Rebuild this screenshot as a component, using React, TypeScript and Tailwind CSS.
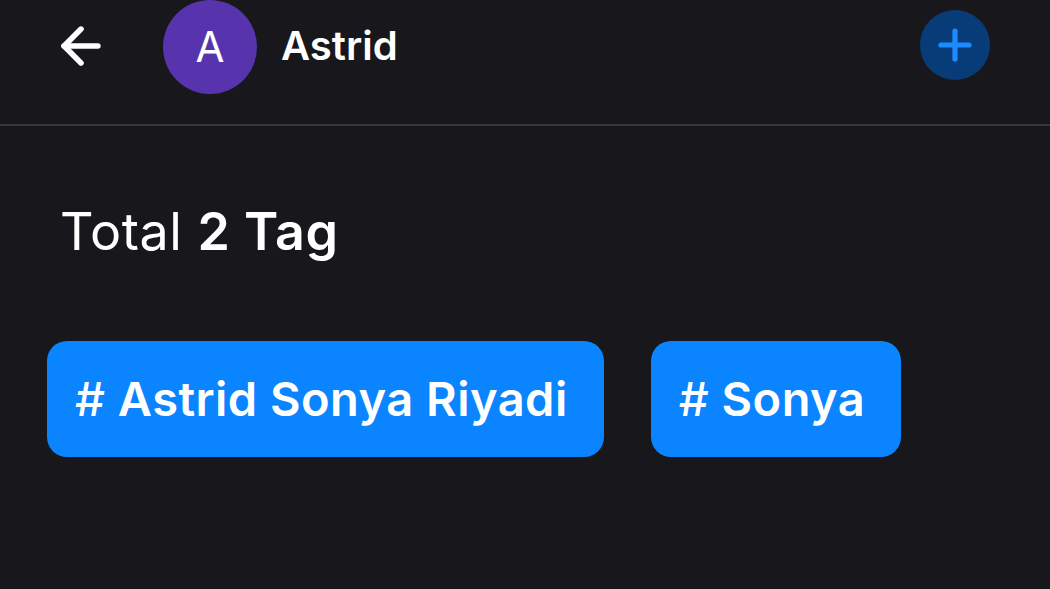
import { ArrowLeft, Plus } from "lucide-react";

const tags = ["Astrid Sonya Riyadi", "Sonya"];

export default function App() {
  return (
    <div
      className="h-[589px] w-[1050px] overflow-hidden bg-[#18181c] text-white"
      style={{ fontFamily: "Inter, 'Noto Sans', sans-serif" }}
    >
      <header className="flex h-[126px] items-start border-b-2 border-[#38383c] pr-[60px]">
        <button className="mt-[17px] ml-[52px] flex h-[58px] w-[58px] items-center justify-center">
          <ArrowLeft size={62} strokeWidth={2.3} />
        </button>
        <div className="ml-[53px] flex h-[94px] w-[94px] items-center justify-center rounded-full bg-[#5734ad] text-[42px] font-normal leading-none">
          A
        </div>
        <span className="mt-[24px] ml-[24px] text-[40px] font-semibold leading-[44px]">Astrid</span>
        <button className="mt-[10px] ml-auto flex h-[70px] w-[70px] items-center justify-center rounded-full bg-[#083c78]">
          <Plus size={48} strokeWidth={2.6} className="text-[#1a8cff]" />
        </button>
      </header>

      <main className="px-[47px]">
        <p className="mt-[75px] pl-[13px] text-[52px] leading-[62px] tracking-[0.01em]">
          Total <span className="font-semibold">2 Tag</span>
        </p>
        <div className="mt-[78px] flex gap-[47px]">
          {tags.map((t) => (
            <div
              key={t}
              className="flex h-[116px] items-center rounded-[20px] bg-[#0a84ff] pr-[36px] pl-[28px] text-[47px] font-semibold tracking-[0.01em]"
            >
              <span className="font-medium">#</span>&nbsp;{t}
            </div>
          ))}
        </div>
      </main>
    </div>
  );
}
